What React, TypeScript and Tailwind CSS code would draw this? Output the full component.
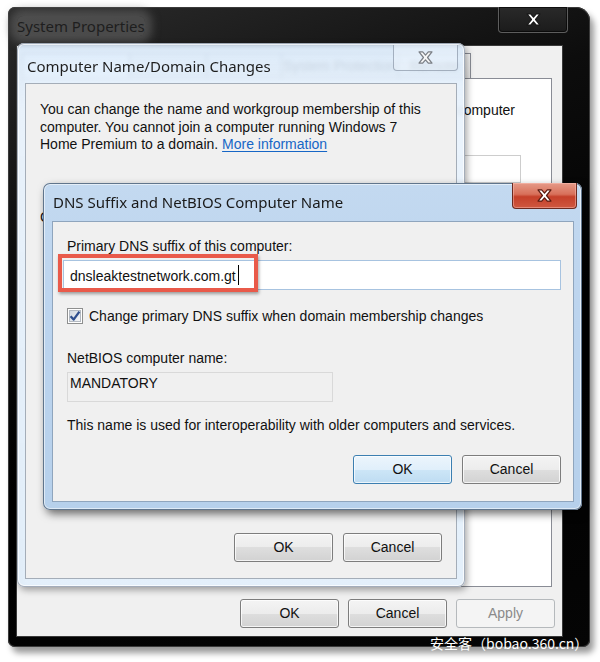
import React from "react";

function XGlyph({ outline, fill, w = 17, h = 13 }: { outline: string; fill: string; w?: number; h?: number }) {
  return (
    <svg width={w} height={h} viewBox="-1 -1 18 14">
      <polygon
        points="1,0 5,0 8,3.5 11,0 15,0 10.2,6 15,12 11,12 8,8.5 5,12 1,12 5.8,6"
        fill={fill}
        stroke={outline}
        strokeWidth="1.3"
        strokeLinejoin="round"
      />
    </svg>
  );
}

function Btn({ children, kind = "normal" }: { children: React.ReactNode; kind?: "normal" | "default" | "disabled" }) {
  if (kind === "default") {
    return (
      <div className="w-[99px] h-[29px] rounded-[3px] border border-[#3c7fb1] bg-[linear-gradient(#ecf5fc_0%,#e0effb_50%,#cde6f7_50%,#bedcf2_100%)] shadow-[inset_0_0_0_1px_rgba(255,255,255,0.7)] flex items-center justify-center text-[14px] text-[#111]">
        {children}
      </div>
    );
  }
  if (kind === "disabled") {
    return (
      <div className="w-[99px] h-[29px] rounded-[3px] border border-[#b5b9bc] bg-[#f4f4f4] flex items-center justify-center text-[14px] text-[#8a8a8a]">
        {children}
      </div>
    );
  }
  return (
    <div className="w-[99px] h-[29px] rounded-[3px] border border-[#7d7d7d] bg-[linear-gradient(#f4f4f4_0%,#ececec_50%,#dedede_50%,#d2d2d2_100%)] shadow-[inset_0_0_0_1px_rgba(255,255,255,0.75)] flex items-center justify-center text-[14px] text-[#111]">
      {children}
    </div>
  );
}

function CheckBox() {
  return (
    <svg width="16" height="16" viewBox="0 0 16 16">
      <defs>
        <linearGradient id="cbg" x1="0" y1="0" x2="1" y2="1">
          <stop offset="0" stopColor="#cfd6de" />
          <stop offset="1" stopColor="#f6f7f9" />
        </linearGradient>
      </defs>
      <rect x="0.5" y="0.5" width="15" height="15" fill="#ffffff" stroke="#8e8f8f" />
      <rect x="2.5" y="2.5" width="11" height="11" fill="url(#cbg)" stroke="#b3b9c1" />
      <path d="M3.6 8.2 L6.6 11.6 L12.4 3.6" fill="none" stroke="#2f4f8e" strokeWidth="2.3" strokeLinejoin="round" />
    </svg>
  );
}

export default function App() {
  const sans = "font-['Liberation_Sans',Arial,sans-serif]";
  const title = "font-['Noto_Sans',sans-serif]";
  return (
    <div className={`relative w-[600px] h-[662px] bg-white overflow-hidden ${sans}`}>
      {/* System Properties window (dark glass) */}
      <div className="absolute left-[8px] top-[7px] w-[582px] h-[640px] rounded-[7px] rounded-tr-[14px] bg-[linear-gradient(160deg,#2c2c2c_0%,#0d0d0d_30%,#000_60%,#050505_100%)] shadow-[inset_0_0_0_1px_#3a3a3a,4px_6px_6px_rgba(0,0,0,0.4)] flex flex-col">
        <div className="h-[38px] flex items-start">
          <div className="mt-[9px] ml-[9px] h-[20px] flex items-center">
            <span className={`${title} text-[15px] leading-[20px] text-[#1e1e1e] bg-[rgba(105,105,105,0.55)] shadow-[0_0_9px_7px_rgba(105,105,105,0.55)] rounded-[6px]`}>
              System Properties
            </span>
          </div>
          <div className="ml-auto mr-[22px] w-[70px] h-[26px] rounded-b-[4px] border border-t-0 border-[#5d5d5d] bg-[linear-gradient(#2a2a2a,#1b1b1b)] shadow-[inset_0_0_0_1px_rgba(0,0,0,0.6)] flex items-center justify-center">
            <XGlyph outline="#1a1a1a" fill="#ffffff" />
          </div>
        </div>
        <div className="ml-[8px] w-[547px] h-[592px] bg-[#f0f0f0] border border-[#3a3a3a] flex flex-col">
          {/* tabs */}
          <div className="h-[32px] pt-[7px] pl-[5px] flex items-end text-[14px] text-[#222]">
            <div className="w-[108px] h-[25px] border border-b-0 border-[#898c95] bg-white" />
            <div className="w-[78px] h-[25px] -ml-px border border-b-0 border-[#898c95] bg-[linear-gradient(#f5f5f5,#e6e6e6)]" />
            <div className="w-[76px] h-[25px] -ml-px border border-b-0 border-[#898c95] bg-[linear-gradient(#f5f5f5,#e6e6e6)]" />
            <div className="w-[118px] h-[25px] -ml-px border border-b-0 border-[#898c95] bg-[linear-gradient(#f5f5f5,#e6e6e6)] flex items-center justify-center text-[#666]">System Protection</div>
            <div className="w-[73px] h-[25px] -ml-px border border-b-0 border-[#898c95] bg-[linear-gradient(#f5f5f5,#e6e6e6)] flex items-center justify-center">Remote</div>
          </div>
          <div className="ml-[5px] w-[530px] h-[509px] bg-white border border-[#898c95] flex flex-col text-[14px] leading-[16px] text-[#111]">
            <div className="mt-[23px] pr-[36px] text-right whitespace-nowrap">computer</div>
            <div className="mt-[37px] self-end mr-[30px] w-[300px] h-[28px] border border-[#cdcdcd] bg-white" />
          </div>
          <div className="mt-auto pb-[8px] pr-[7px] flex justify-end gap-[9px]">
            <Btn>OK</Btn>
            <Btn>Cancel</Btn>
            <Btn kind="disabled">Apply</Btn>
          </div>
        </div>
      </div>

      {/* Computer Name/Domain Changes (inactive) */}
      <div className="absolute left-[17px] top-[43px] w-[448px] h-[544px] rounded-[7px] bg-[linear-gradient(180deg,rgba(214,232,250,0.8)_0%,rgba(232,242,252,0.9)_12%,rgba(225,238,250,0.92)_100%)] backdrop-blur-[2px] shadow-[inset_0_0_0_1px_rgba(95,110,130,0.55),inset_0_0_0_2px_rgba(255,255,255,0.7),2px_3px_7px_rgba(0,0,0,0.35)] flex flex-col">
        <div className="h-[40px] flex items-start">
          <div className={`${title} mt-[13px] ml-[10px] text-[15px] leading-[20px] text-[#1e1e1e] whitespace-nowrap`}>Computer Name/Domain Changes</div>
          <div className="ml-auto mr-[7px] mt-[2px] w-[65px] h-[26px] rounded-b-[4px] border border-t-0 border-[rgba(110,125,145,0.55)] bg-[rgba(240,246,252,0.35)] flex items-center justify-center">
            <XGlyph outline="#7b7f85" fill="#f6f6f6" />
          </div>
        </div>
        <div className="ml-[8px] w-[432px] h-[496px] bg-[#f0f0f0] border border-[#a4adb8] flex flex-col text-[14px] text-[#111]">
          <div className="mt-[17px] ml-[14px] leading-[17.5px] whitespace-nowrap">
            You can change the name and workgroup membership of this
            <br />
            computer. You cannot join a computer running Windows 7
            <br />
            Home Premium to a domain.{" "}
            <span className="text-[#1666c6] underline underline-offset-2">More information</span>
          </div>
          <div className="mt-[55px] ml-[14px] leading-[16px]">C</div>
          <div className="mt-auto pb-[16px] pr-[14px] flex justify-end gap-[10px]">
            <Btn>OK</Btn>
            <Btn>Cancel</Btn>
          </div>
        </div>
      </div>

      {/* DNS Suffix and NetBIOS Computer Name (active) */}
      <div className="absolute left-[43px] top-[183px] w-[539px] h-[327px] rounded-[7px] bg-[linear-gradient(180deg,#c3d9f0_0%,#bcd4ee_40%,#b6d0eb_100%)] shadow-[inset_0_0_0_1px_#60758c,inset_0_0_0_2px_rgba(255,255,255,0.55),3px_4px_9px_rgba(0,0,0,0.55)] flex flex-col">
        <div className="h-[38px] flex items-start">
          <div className={`${title} mt-[9px] ml-[10px] text-[15px] leading-[20px] text-[#1a1a1a] whitespace-nowrap`}>DNS Suffix and NetBIOS Computer Name</div>
          <div className="ml-auto mr-[5px] w-[65px] h-[26px] rounded-b-[4px] border border-t-0 border-[#6b2a20] bg-[linear-gradient(#e59a88_0%,#d8705a_45%,#c5402a_55%,#cf5840_100%)] shadow-[inset_0_0_0_1px_rgba(255,200,190,0.45)] flex items-center justify-center">
            <XGlyph outline="#5a1a10" fill="#ffffff" />
          </div>
        </div>
        <div className="ml-[9px] w-[522px] h-[281px] bg-[#f0f0f0] border border-[#8fa5bd] flex flex-col text-[14px] text-[#111]">
          <div className="mt-[16px] ml-[14px] leading-[16px]">Primary DNS suffix of this computer:</div>
          <div className="relative mt-[6px] ml-[10px] w-[498px] h-[30px] bg-white border border-[#a7c3e0] pl-[6px] pt-[4px] leading-[16px] whitespace-nowrap">
            dnsleaktestnetwork.com.gt
            <span className="inline-block align-[-4px] ml-[2px] w-px h-[20px] bg-black" />
            <div className="absolute left-[-6px] top-[-7px] w-[200px] h-[38px] border-[4px] border-[#e95a4a] shadow-[1px_2px_3px_rgba(0,0,0,0.35)]" />
          </div>
          <div className="mt-[18px] ml-[14px] h-[16px] flex items-center gap-[6px]">
            <CheckBox />
            <span className="leading-[16px]">Change primary DNS suffix when domain membership changes</span>
          </div>
          <div className="mt-[26px] ml-[14px] leading-[16px]">NetBIOS computer name:</div>
          <div className="mt-[6px] ml-[14px] w-[266px] h-[30px] border border-[#d9d9d9] bg-[#f0f0f0] pl-[2px] pt-[2px] leading-[16px]">MANDATORY</div>
          <div className="mt-[15px] ml-[14px] leading-[16px]">This name is used for interoperability with older computers and services.</div>
          <div className="mt-auto pb-[17px] pr-[12px] flex justify-end gap-[10px]">
            <Btn kind="default">OK</Btn>
            <Btn>Cancel</Btn>
          </div>
        </div>
      </div>

      {/* watermark */}
      <div className="absolute left-[430px] top-[635px] text-white text-[14px] leading-[16px] whitespace-nowrap font-['Noto_Sans_CJK_SC',sans-serif]">
        安全客（bobao.360.cn）
      </div>
    </div>
  );
}
